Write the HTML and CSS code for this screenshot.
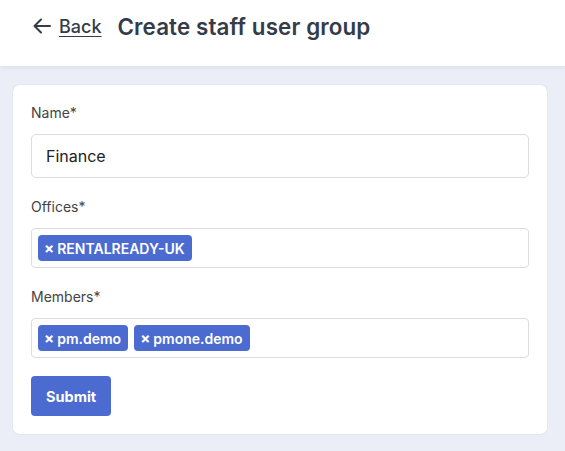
FILE: index.html
```html
<!DOCTYPE html>
<html lang="en">
<head>
    <meta charset="UTF-8">
    <title>Create staff user group</title>
    <link rel="stylesheet" href="styles.css">
</head>
<body>
    <div class="topbar">
        <a class="back" href="#">
            <svg class="back-icon" width="20" height="20" viewBox="0 0 20 20" fill="none" stroke="currentColor" stroke-width="2" stroke-linecap="round" stroke-linejoin="round">
                <path d="M18 10H2.5M9 3.5L2.5 10L9 16.5"/>
            </svg>
            <span class="back-text">Back</span>
        </a>
        <h1>Create staff user group</h1>
    </div>

    <div class="page">
        <form class="card">
            <div class="field">
                <label>Name*</label>
                <input type="text" value="Finance">
            </div>

            <div class="field">
                <label>Offices*</label>
                <div class="tag-box">
                    <span class="tag"><span class="x">×</span>RENTALREADY-UK</span>
                </div>
            </div>

            <div class="field">
                <label>Members*</label>
                <div class="tag-box">
                    <span class="tag"><span class="x">×</span>pm.demo</span>
                    <span class="tag"><span class="x">×</span>pmone.demo</span>
                </div>
            </div>

            <button type="button">Submit</button>
        </form>
    </div>
</body>
</html>
```

FILE: styles.css
```css
body { margin: 0; font-family: Inter, "Noto Sans", sans-serif; background: #ebeef6; color: #353b48; }
.topbar { background: #fff; height: 52px; padding: 0 0 14px 32px; display: flex; align-items: center; gap: 16px; box-shadow: 0 2px 4px rgba(0,0,0,0.06); }
.back { display: flex; align-items: center; gap: 7px; color: #353b48; text-decoration: none; }
.back-icon { display: block; }
.back-text { font-size: 18px; font-weight: 500; text-decoration: underline; text-underline-offset: 3px; }
h1 { margin: 0; font-size: 22.4px; font-weight: 600; letter-spacing: 0.1px; color: #353b48; }
.page { padding: 19px 18px 16px 13px; }
.card { background: #fff; border-radius: 7px; box-shadow: 0 0 0 1px #e3e7f0; padding: 18px; }
.field { margin-bottom: 19px; }
label { display: block; font-size: 14px; line-height: 20px; color: #444; margin-bottom: 11px; }
input { width: 100%; box-sizing: border-box; height: 44px; border: 1px solid #dcdcdc; border-radius: 5px; padding: 0 14px; font-family: inherit; font-size: 16px; color: #222; }
.tag-box { box-sizing: border-box; border: 1px solid #dcdcdc; border-radius: 4px; padding: 6px; display: flex; gap: 6px; min-height: 40px; }
.tag { background: #4b6bd0; color: #fff; border-radius: 4px; height: 26px; display: flex; align-items: center; padding: 0 7px 0 6px; font-size: 14px; font-weight: 600; }
.x { font-weight: 700; font-size: 15px; margin-right: 3px; }
button { background: #4b6bd0; color: #fff; border: none; border-radius: 4px; height: 40px; padding: 0 15px; font-family: inherit; font-size: 14.5px; font-weight: 700; cursor: pointer; margin-top: -1px; }
```
